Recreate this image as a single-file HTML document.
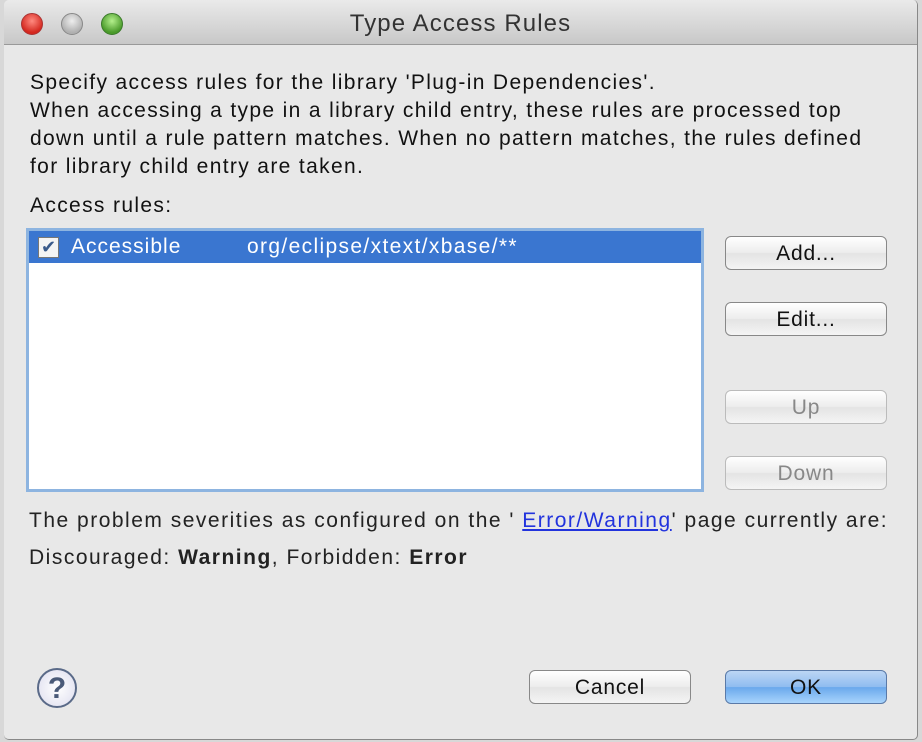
<!DOCTYPE html>
<html><head><style>
*{margin:0;padding:0;box-sizing:border-box}
body{width:922px;height:742px;background:#d8d8d8;font-family:"Liberation Sans",sans-serif;position:relative;overflow:hidden}
.win{position:absolute;left:4px;top:0;width:914px;height:740px;background:#e8e8e8;border-radius:5px;overflow:hidden;border-right:1px solid #888;border-bottom:1px solid #888}
.tb{position:absolute;left:0;top:0;width:100%;height:45px;background:linear-gradient(#eaeaea,#c8c8c8);border-bottom:1px solid #999}
.tb .t{position:absolute;left:0;right:0;top:10px;text-align:center;font-size:24px;color:#333;letter-spacing:1.1px}
.dot{position:absolute;top:13px;width:22px;height:22px;border-radius:50%}
.tx{position:absolute;font-size:21px;color:#111;letter-spacing:1.35px;white-space:nowrap}
.btn{position:absolute;width:162px;height:34px;border:1px solid #888;border-radius:6px;background:linear-gradient(#fff,#ececec 50%,#e4e4e4 51%,#f4f4f4);font-size:21px;text-align:center;line-height:33px;color:#111;letter-spacing:.8px}
.dis{color:#888;border-color:#bbb}
</style></head><body>
<div class="win">
<div class="tb">
<div class="dot" style="left:17px;background:radial-gradient(circle at 50% 35%,#ff8a80,#d4281f 70%);border:1px solid #a33"></div>
<div class="dot" style="left:57px;background:radial-gradient(circle at 50% 35%,#eee,#b0b0b0 70%);border:1px solid #888"></div>
<div class="dot" style="left:97px;background:radial-gradient(circle at 50% 35%,#b4f08c,#4a9a2a 70%);border:1px solid #3a7a2a"></div>
<div class="t">Type Access Rules</div>
</div>
<div class="tx" style="left:26px;top:71px">Specify access rules for the library 'Plug-in Dependencies'.</div>
<div class="tx" style="left:26px;top:99px">When accessing a type in a library child entry, these rules are processed top</div>
<div class="tx" style="left:26px;top:127px">down until a rule pattern matches. When no pattern matches, the rules defined</div>
<div class="tx" style="left:26px;top:155px">for library child entry are taken.</div>
<div class="tx" style="left:26px;top:194px">Access rules:</div>
<div style="position:absolute;left:22px;top:228px;width:678px;height:264px;background:#fff;border:3px solid #8db4e0">
 <div style="position:absolute;left:0;top:0;right:0;height:32px;background:#3a76d0"></div>
 <div style="position:absolute;left:9px;top:6px;width:21px;height:21px;background:#f4f4f4;border:1px solid #777;color:#3a5a8a;font-size:18px;line-height:19px;text-align:center">✔</div>
 <div class="tx" style="left:42px;top:4px;color:#fff;letter-spacing:1px">Accessible</div>
 <div class="tx" style="left:218px;top:4px;color:#fff">org/eclipse/xtext/xbase/**</div>
</div>
<div class="btn" style="left:721px;top:236px">Add...</div>
<div class="btn" style="left:721px;top:302px">Edit...</div>
<div class="btn dis" style="left:721px;top:390px">Up</div>
<div class="btn dis" style="left:721px;top:456px">Down</div>
<div class="tx" style="left:25px;top:509px;letter-spacing:1.5px;color:#222">The problem severities as configured on the ' <span style="color:#2233dd;text-decoration:underline">Error/Warning</span>' page currently are:</div>
<div class="tx" style="left:25px;top:546px;letter-spacing:1.5px;color:#222">Discouraged: <b>Warning</b>, Forbidden: <b>Error</b></div>
<div style="position:absolute;left:33px;top:668px;width:40px;height:40px;border-radius:50%;border:2px solid #5a6a88;background:radial-gradient(#fff,#dde);color:#4a5a78;font-weight:bold;font-size:30px;text-align:center;line-height:37px">?</div>
<div class="btn" style="left:525px;top:670px">Cancel</div>
<div class="btn" style="left:721px;top:670px;border-color:#5a7aa8;background:linear-gradient(#bcd6f4,#8fbcf0 50%,#6aa8ec 51%,#a8d4fc)">OK</div>
</div>
</body></html>
